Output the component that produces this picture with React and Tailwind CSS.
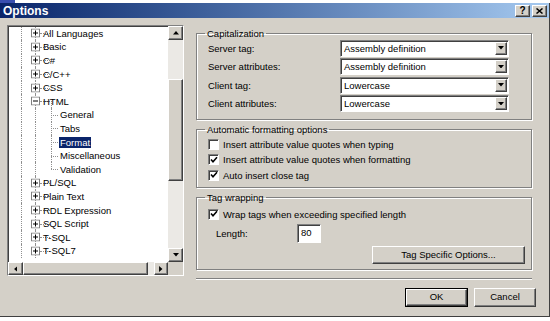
import React from 'react';

const raised =
  'border border-t-white border-l-white border-r-[#404040] border-b-[#404040] shadow-[inset_-1px_-1px_0_#808080]';
const sunken =
  'border border-t-[#808080] border-l-[#808080] border-r-white border-b-white shadow-[inset_1px_1px_0_#404040]';

const treeItems = [
  { label: 'All Languages', kind: 'plus' },
  { label: 'Basic', kind: 'plus' },
  { label: 'C#', kind: 'plus' },
  { label: 'C/C++', kind: 'plus' },
  { label: 'CSS', kind: 'plus' },
  { label: 'HTML', kind: 'minus' },
  { label: 'General', kind: 'child' },
  { label: 'Tabs', kind: 'child' },
  { label: 'Format', kind: 'child', selected: true },
  { label: 'Miscellaneous', kind: 'child' },
  { label: 'Validation', kind: 'child', last: true },
  { label: 'PL/SQL', kind: 'plus' },
  { label: 'Plain Text', kind: 'plus' },
  { label: 'RDL Expression', kind: 'plus' },
  { label: 'SQL Script', kind: 'plus' },
  { label: 'T-SQL', kind: 'plus' },
  { label: 'T-SQL7', kind: 'plus' },
];

function Arrow({ dir }) {
  const paths = {
    up: 'M0 4h7L3.5 0z',
    down: 'M0 0h7L3.5 4z',
    left: 'M4 0v7L0 3.5z',
    right: 'M0 0v7L4 3.5z',
  };
  const vertical = dir === 'up' || dir === 'down';
  return (
    <svg
      width={vertical ? 6 : 3.5}
      height={vertical ? 3.5 : 6}
      viewBox={vertical ? '0 0 7 4' : '0 0 4 7'}
    >
      <path d={paths[dir]} fill="#000" />
    </svg>
  );
}

function ExpandBox({ open }) {
  return (
    <svg width="9" height="9" viewBox="0 0 9 9" className="absolute left-[23px] top-1/2 -translate-y-1/2">
      <rect x="0.5" y="0.5" width="8" height="8" fill="#fff" stroke="#808080" />
      <path d="M2 4.5h5" stroke="#000" />
      {!open && <path d="M4.5 2v5" stroke="#000" />}
    </svg>
  );
}

function TreeRow({ item }) {
  const dot = 'absolute border-dotted border-[#909090]';
  const isChild = item.kind === 'child';
  return (
    <div className="relative h-[13.6px] flex items-center">
      <span className={`${dot} left-[13px] top-0 bottom-0 border-l`} />
      <span className={`${dot} left-[27px] top-0 bottom-0 border-l`} />
      {!isChild && (
        <>
          <span className={`${dot} left-[32px] w-[10px] top-1/2 border-t`} />
          <ExpandBox open={item.kind === 'minus'} />
        </>
      )}
      {item.kind === 'minus' && <span className={`${dot} left-[43px] top-1/2 bottom-0 border-l`} />}
      {isChild && (
        <>
          <span className={`${dot} left-[43px] top-0 border-l ${item.last ? 'h-1/2' : 'bottom-0'}`} />
          <span className={`${dot} left-[43px] w-[7px] top-1/2 border-t`} />
        </>
      )}
      <span
        className={`relative leading-[11px] px-[1px] ${isChild ? 'ml-[51px]' : 'ml-[34px]'} ${
          item.selected ? 'bg-[#0a246a] text-white' : ''
        }`}
      >
        {item.label}
      </span>
    </div>
  );
}

function Tree() {
  return (
    <div className={`${sunken} w-[177px] h-[251px] bg-white grid grid-cols-[1fr_15px] grid-rows-[1fr_13px]`}>
      <div className="overflow-hidden pt-[0.5px]">
        {treeItems.map((item) => (
          <TreeRow key={item.label} item={item} />
        ))}
      </div>
      {/* vertical scrollbar */}
      <div className="flex flex-col">
        <div className={`${raised} bg-[#d4d0c8] h-[14px] flex items-center justify-center`}>
          <Arrow dir="up" />
        </div>
        <div className="h-[39px] bg-[#ebe9e5]" />
        <div className={`${raised} bg-[#d4d0c8] h-[102px]`} />
        <div className="flex-1 bg-[#ebe9e5]" />
        <div className={`${raised} bg-[#d4d0c8] h-[14px] flex items-center justify-center`}>
          <Arrow dir="down" />
        </div>
      </div>
      {/* horizontal scrollbar */}
      <div className="flex">
        <div className={`${raised} bg-[#d4d0c8] w-[15px] flex items-center justify-center`}>
          <Arrow dir="left" />
        </div>
        <div className={`${raised} bg-[#d4d0c8] w-[125px]`} />
        <div className="flex-1 bg-[#ebe9e5]" />
        <div className={`${raised} bg-[#d4d0c8] w-[14px] flex items-center justify-center`}>
          <Arrow dir="right" />
        </div>
      </div>
      <div className="bg-[#d4d0c8]" />
    </div>
  );
}

function Group({ title, className = '', children }) {
  return (
    <fieldset
      className={`border border-[#808080] shadow-[inset_1px_1px_0_#fff,1px_1px_0_#fff] ${className}`}
    >
      <legend className="-ml-[3px] px-[2px] leading-[11px]">{title}</legend>
      {children}
    </fieldset>
  );
}

function Select({ value }) {
  return (
    <div className={`${sunken} bg-white w-[169px] h-[17px] flex items-center`}>
      <span className="flex-1 pl-[3px] leading-[11px]">{value}</span>
      <div className={`${raised} bg-[#d4d0c8] w-[12px] h-[13px] mr-[1px] flex items-center justify-center`}>
        <Arrow dir="down" />
      </div>
    </div>
  );
}

function Check({ checked, label }) {
  return (
    <div className="h-[15.5px] flex items-center">
      <span className={`${sunken} bg-white w-[11px] h-[11px] flex items-center justify-center`}>
        {checked && (
          <svg width="8" height="8" viewBox="0 0 8 8">
            <path d="M1 3.5l2 2.2L7 1.3" fill="none" stroke="#000" strokeWidth="1.6" />
          </svg>
        )}
      </span>
      <span className="ml-[4px] leading-[11px]">{label}</span>
    </div>
  );
}

function Button({ children, className = '', isDefault }) {
  return (
    <div className={`${isDefault ? 'border border-black' : ''} ${className}`}>
      <div className={`${raised} bg-[#d4d0c8] h-full flex items-center justify-center`}>{children}</div>
    </div>
  );
}

export default function App() {
  const caps = [
    ['Server tag:', 'Assembly definition'],
    ['Server attributes:', 'Assembly definition'],
    ['Client tag:', 'Lowercase'],
    ['Client attributes:', 'Lowercase'],
  ];

  return (
    <div className="w-[550px] h-[321px] bg-white font-['Liberation_Sans',Arial,sans-serif] text-[9.5px] text-black overflow-hidden">
      <div className="h-[3px] flex">
        <div className="w-[15px] bg-[#3a4fb0]" />
      </div>
      <div className="h-[314px] bg-[#d4d0c8] border-r border-b border-r-[#404040] border-b-[#404040] flex flex-col">
        {/* title bar */}
        <div className="h-[15px] bg-gradient-to-r from-[#0a246a] to-[#a6caf0] flex items-center pl-[3px] pr-[2px]">
          <span className="flex-1 text-white font-bold text-[12px] leading-[14px]">Options</span>
          <div className="flex gap-[2px]">
            <div className={`${raised} bg-[#d4d0c8] w-[15px] h-[12px] flex items-center justify-center font-bold text-[10px] leading-[10px]`}>
              ?
            </div>
            <div className={`${raised} bg-[#d4d0c8] w-[15px] h-[12px] flex items-center justify-center`}>
              <svg width="7" height="6" viewBox="0 0 7 6">
                <path d="M0.5 0.5l6 5M6.5 0.5l-6 5" stroke="#000" strokeWidth="1.5" />
              </svg>
            </div>
          </div>
        </div>

        {/* body */}
        <div className="flex">
          <div className="ml-[7px] mt-[7px]">
            <Tree />
          </div>

          <div className="ml-[12px] mt-[10px] w-[340px] flex flex-col">
            <Group title="Capitalization" className="mr-[4px] pl-[11px] pr-[22px] pb-[7px]">
              <div className="flex flex-col gap-[1.5px] mt-[0.5px]">
                {caps.map(([label, value]) => (
                  <div key={label} className="flex items-center">
                    <span className="flex-1 leading-[11px]">{label}</span>
                    <Select value={value} />
                  </div>
                ))}
              </div>
            </Group>

            <Group title="Automatic formatting options" className="mr-[4px] mt-[4px] pl-[11px] pt-[1.5px] pb-[4px]">
              <Check label="Insert attribute value quotes when typing" />
              <Check checked label="Insert attribute value quotes when formatting" />
              <Check checked label="Auto insert close tag" />
            </Group>

            <Group title="Tag wrapping" className="mr-[4px] mt-[4px] pl-[11px] pt-[3.5px] pb-[4.5px] pr-[6px]">
              <Check checked label="Wrap tags when exceeding specified length" />
              <div className="mt-[2px] h-[19px] flex items-center">
                <span className="ml-[8px] w-[81px] leading-[11px]">Length:</span>
                <div className={`${sunken} bg-white w-[24px] h-[19px] flex items-center pl-[3px]`}>80</div>
              </div>
              <div className="mt-[3px] flex justify-end">
                <Button className="w-[153px] h-[18px]">Tag Specific Options...</Button>
              </div>
            </Group>

            <div className="mr-[4px] mt-[8px] border-t border-t-[#808080] border-b border-b-white" />

            <div className="mt-[8px] flex justify-end gap-[6px]">
              <Button isDefault className="w-[63px] h-[19px]">
                OK
              </Button>
              <Button className="w-[62px] h-[19px]">Cancel</Button>
            </div>
          </div>
        </div>
      </div>
    </div>
  );
}
